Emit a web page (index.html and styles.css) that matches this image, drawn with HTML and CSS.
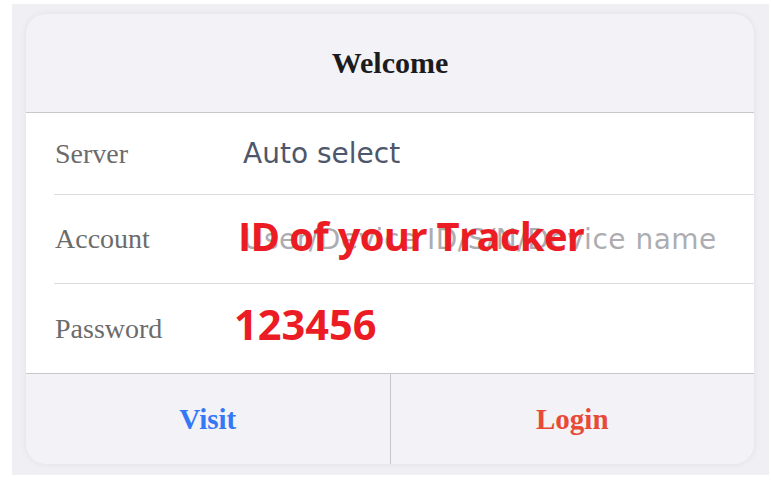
FILE: index.html
```html
<!DOCTYPE html>
<html>
<head>
<meta charset="utf-8">
<link rel="stylesheet" href="styles.css">
</head>
<body>
<div class="backdrop">
  <div class="card">
    <div class="header">Welcome</div>
    <div class="form">
      <div class="row row-server">
        <div class="label">Server</div>
        <div class="value">Auto select</div>
      </div>
      <div class="row row-account">
        <div class="label">Account</div>
        <div class="value placeholder">User/Device ID/S/N/Device name
          <span class="note note-id">ID of your Tracker</span>
        </div>
      </div>
      <div class="row row-password">
        <div class="label">Password</div>
        <div class="value">
          <span class="note note-pw">123456</span>
        </div>
      </div>
    </div>
    <div class="actions">
      <div class="btn btn-visit">Visit</div>
      <div class="btn btn-login">Login</div>
    </div>
  </div>
</div>
</body>
</html>
```
FILE: styles.css
```css
html, body {
  margin: 0;
  padding: 0;
  background: #ffffff;
}
.backdrop {
  margin: 4px 0 0 12px;
  width: 757px;
  height: 471px;
  background: #efeff4;
  padding: 10px 0 0 14px;
  box-sizing: border-box;
}
.card {
  width: 728px;
  height: 450px;
  border-radius: 20px;
  overflow: hidden;
  background: #f2f2f7;
  box-shadow: 0 0 6px rgba(0, 0, 0, 0.07);
  display: flex;
  flex-direction: column;
}
.header {
  height: 98px;
  border-bottom: 1px solid #c8c7cc;
  display: flex;
  align-items: center;
  justify-content: center;
  font-family: "Liberation Serif", serif;
  font-weight: bold;
  font-size: 30px;
  color: #1c1c1e;
}
.form {
  background: #ffffff;
  padding-left: 28px;
}
.row {
  display: flex;
  align-items: stretch;
}
.row-server {
  height: 81px;
  border-bottom: 1px solid #dcdce0;
}
.row-account {
  height: 88px;
  border-bottom: 1px solid #dcdce0;
}
.row-password {
  height: 89px;
}
.label {
  width: 188px;
  display: flex;
  align-items: center;
  padding-left: 1px;
  font-family: "Liberation Serif", serif;
  font-size: 28px;
  color: #6b6b6b;
}
.value {
  flex: 1;
  position: relative;
  display: flex;
  align-items: center;
  font-family: "DejaVu Sans", sans-serif;
  font-size: 28px;
  color: #4e566b;
  white-space: nowrap;
}
.placeholder {
  color: #adadb1;
  letter-spacing: 0.5px;
}
.note {
  position: absolute;
  top: 21px;
  font-family: "Open Sans", sans-serif;
  font-weight: 700;
  font-size: 40px;
  line-height: 40px;
  color: #ec1c24;
  white-space: nowrap;
}
.note-id {
  left: -5px;
  letter-spacing: -0.7px;
}
.note-pw {
  left: -9px;
  top: 20px;
  font-size: 41.5px;
}
.actions {
  flex: 1;
  display: flex;
  border-top: 1px solid #c8c7cc;
}
.btn {
  flex: 1;
  display: flex;
  align-items: center;
  justify-content: center;
  font-family: "Liberation Serif", serif;
  font-weight: bold;
  font-size: 29px;
}
.btn-visit {
  color: #3478f6;
}
.btn-login {
  color: #e84a36;
  border-left: 1px solid #c8c7cc;
}
```
